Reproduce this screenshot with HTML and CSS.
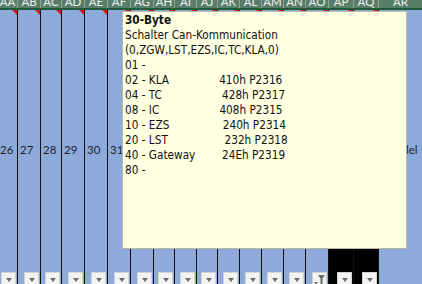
FILE: index.html
```html
<!DOCTYPE html>
<html lang="de">

<head>
    <meta charset="UTF-8">
    <title>Tabelle</title>
    <link rel="stylesheet" href="styles.css">
</head>

<body>
    <div class="sheet">
        <!-- Column headers -->
        <div class="head">
            <div class="hc">AA</div>
            <div class="hc">AB</div>
            <div class="hc">AC</div>
            <div class="hc">AD</div>
            <div class="hc">AE</div>
            <div class="hc">AF</div>
            <div class="hc">AG</div>
            <div class="hc">AH</div>
            <div class="hc">AI</div>
            <div class="hc">AJ</div>
            <div class="hc">AK</div>
            <div class="hc">AL</div>
            <div class="hc">AM</div>
            <div class="hc">AN</div>
            <div class="hc">AO</div>
            <div class="hc">AP</div>
            <div class="hc">AQ</div>
            <div class="hc hc-plain">AR</div>
        </div>

        <!-- Cells -->
        <div class="grid">
            <div class="col"><div class="num">26</div><div class="frow"><span class="fbtn"></span></div></div>
            <div class="col"><div class="num">27</div><div class="frow"><span class="fbtn"></span></div></div>
            <div class="col"><div class="num">28</div><div class="frow"><span class="fbtn"></span></div></div>
            <div class="col"><div class="num">29</div><div class="frow"><span class="fbtn"></span></div></div>
            <div class="col"><div class="num">30</div><div class="frow"><span class="fbtn"></span></div></div>
            <div class="col"><div class="num">31</div><div class="frow"><span class="fbtn"></span></div></div>
            <div class="col"><div class="num"></div><div class="frow"><span class="fbtn"></span></div></div>
            <div class="col"><div class="num"></div><div class="frow"><span class="fbtn"></span></div></div>
            <div class="col"><div class="num"></div><div class="frow"><span class="fbtn"></span></div></div>
            <div class="col"><div class="num"></div><div class="frow"><span class="fbtn"></span></div></div>
            <div class="col"><div class="num"></div><div class="frow"><span class="fbtn"></span></div></div>
            <div class="col"><div class="num"></div><div class="frow"><span class="fbtn"></span></div></div>
            <div class="col"><div class="num"></div><div class="frow"><span class="fbtn"></span></div></div>
            <div class="col"><div class="num"></div><div class="frow"><span class="fbtn"></span></div></div>
            <div class="col">
                <div class="num"></div>
                <div class="frow">
                    <span class="fbtn fbtn-on">
                        <svg viewBox="0 0 13 13" width="13" height="13">
                            <polygon points="1,9 5,9 3,11.5" fill="#6b6b6b"></polygon>
                            <polygon points="5,2 12,2 9.5,5.5 9.5,11 7.5,11 7.5,5.5" fill="#6b6b6b"></polygon>
                        </svg>
                    </span>
                </div>
            </div>
            <div class="col"><div class="num"></div><div class="frow frow-dark"><span class="fbtn"></span></div></div>
            <div class="col"><div class="num"></div><div class="frow frow-dark"><span class="fbtn"></span></div></div>
            <div class="col col-plain"><div class="num">Parallel</div><div class="frow"></div></div>
        </div>

        <!-- Cell comment -->
        <div class="note"><b>30-Byte</b>
Schalter Can-Kommunication
(0,ZGW,LST,EZS,IC,TC,KLA,0)
01 -
02 - KLA               410h P2316
04 - TC                  428h P2317
08 - IC                  408h P2315
10 - EZS                240h P2314
20 - LST                 232h P2318
40 - Gateway        24Eh P2319
80 -</div>
    </div>
</body>

</html>
```

FILE: styles.css
```css
body {
    margin: 0;
    padding: 0;
    font-family: "Lato", "Liberation Sans", sans-serif;
}

.sheet {
    position: relative;
    width: 422px;
    height: 284px;
    overflow: hidden;
    background: #8eaadb;
}
/* Header row */

.head,
.grid {
    display: grid;
    grid-template-columns: 20px 23px 21px 23px 23px 23px 23px 21px 22px 21px 22px 22px 22px 22px 23px 25px 25px 1fr;
    margin-left: -2px;
}

.head {
    height: 10px;
    background: #587d69;
    border-bottom: 2px solid #1f5a3a;
    box-sizing: border-box;
}

.hc {
    height: 8px;
    overflow: hidden;
    border-right: 1px solid #8fa598;
    color: #eef3f0;
    font-size: 11.5px;
    line-height: 3px;
    text-align: center;
}

.hc-plain {
    border-right: none;
}
/* Columns */

.grid {
    height: 274px;
}

.col {
    position: relative;
    display: flex;
    flex-direction: column;
    border-right: 1px solid #111;
}

.col::before {
    content: "";
    position: absolute;
    top: 0;
    right: 0;
    border-top: 5px solid #e31212;
    border-left: 5px solid transparent;
}

.col-plain {
    border-right: none;
}

.col-plain::before {
    display: none;
}

.num {
    flex: 1;
    padding: 133px 0 0 2px;
    font-size: 11.5px;
    line-height: 14px;
    color: #1b1f2c;
    white-space: nowrap;
}
/* Filter buttons */

.frow {
    height: 35px;
    box-sizing: border-box;
    padding-top: 23px;
    display: flex;
    justify-content: flex-end;
    align-items: flex-start;
}

.frow-dark {
    background: #000;
}

.fbtn {
    width: 15px;
    height: 15px;
    margin-right: 1px;
    box-sizing: border-box;
    background: #f3f3f3;
    border: 1px solid #d2d2d2;
    display: flex;
    justify-content: center;
    align-items: center;
}

.fbtn::after {
    content: "";
    border-top: 4px solid #6b6b6b;
    border-left: 3px solid transparent;
    border-right: 3px solid transparent;
}

.fbtn-on::after {
    display: none;
}
/* Comment box */

.note {
    position: absolute;
    left: 122px;
    top: 11px;
    width: 285px;
    height: 238px;
    box-sizing: border-box;
    padding: 1px 2px 0;
    background: #ffffe1;
    border: 1px solid #b8b8a6;
    font-family: "DejaVu Sans Condensed", "DejaVu Sans", sans-serif;
    font-size: 11.7px;
    line-height: 15px;
    color: #111;
    white-space: pre;
    overflow: hidden;
}
```
